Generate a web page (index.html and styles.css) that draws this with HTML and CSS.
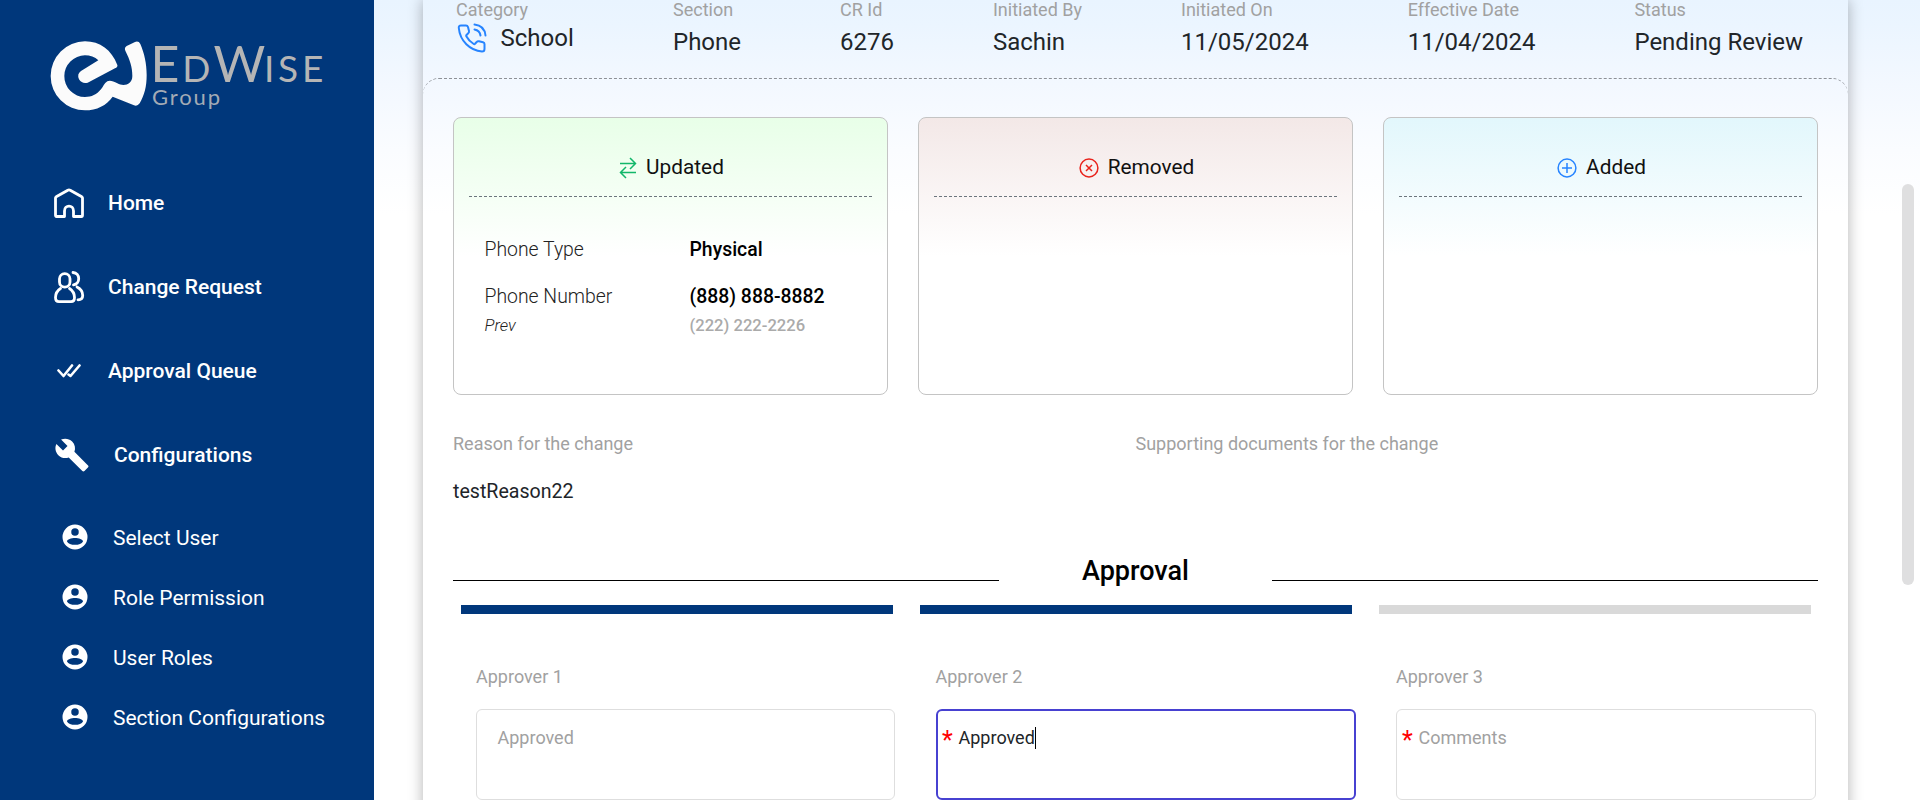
FILE: index.html
```html
<!DOCTYPE html>
<html lang="en">
<head>
<meta charset="utf-8">
<title>EdWise Group</title>
<link rel="stylesheet" href="styles.css">
</head>
<body>
<div class="app">
  <aside class="sidebar">
    <svg class="logo" viewBox="0 0 350 110" width="350" height="110" role="img" aria-label="EdWise Group">
      <path fill="#fbfbfb" transform="scale(.33333)" d="M262 135C245 90 210 64 165 64A104 104 0 0 0 62 168A103 103 0 0 0 165 271C200 271 230 256 248 230L312 256Q322 260 329 250C343 225 350 200 350 165C350 130 343 100 331 72Q326 62 315 66L290 78Q282 83 286 92C300 120 307 140 307 168C307 195 280 200 262 190C250 184 240 180 232 184C222 190 220 200 213 208C200 224 185 231 165 231A62 62 0 0 1 103 168A62 62 0 0 1 165 106C180 106 195 111 205 121L153 153Q140 162 147 178Q157 193 173 188L255 145Q264 141 262 135Z"/>
      <text class="logo-name" y="61.5"><tspan class="logo-cap" x="120.400">E</tspan><tspan x="152.300">D</tspan><tspan class="logo-cap" x="183.500">W</tspan><tspan x="234 248 272">ISE</tspan></text>
      <text class="logo-group" x="122" y="85" textLength="68" lengthAdjust="spacing">Group</text>
    </svg>
    <nav class="nav">
      <a class="nav-item"><span class="nav-icon"><svg width="30" height="30" viewBox="0 0 30 30" class="line"><path d="M10.500 28.500H2.500Q1.500 28.500 1.500 27V10Q1.500 9.300 2.200 8.800L13.800 2.200Q15 1.500 16.200 2.200L27.800 8.800Q28.500 9.300 28.500 10V27Q28.500 28.500 27.500 28.500H19.500V23C19.500 16.500 10.500 16.500 10.500 23Z"/></svg></span>Home</a>
      <a class="nav-item"><span class="nav-icon"><svg width="32" height="34" viewBox="-1 -1 32 34" class="line"><rect x="5.500" y="2.600" width="10.500" height="13.500" rx="5.200"/><path d="M6.500 17.500C3 19.800 1.500 22 1.500 26.500Q1.500 30.700 5 30.700H17Q20.500 30.700 20.500 26.500C20.500 22 19 19.800 15.500 17.500M19 1.500C26.500 2 26.500 13 19.500 13.800M23 16C27 18 28.700 20.500 28.700 24.500Q28.700 28.800 24 28.800"/></svg></span>Change Request</a>
      <a class="nav-item"><span class="nav-icon"><svg width="24" height="14" viewBox="0 0 24 14" class="line thin"><path d="M1.500 6.500L6.500 12L15 1.500M11.500 10.500L13.500 12L22.500 1.500"/></svg></span>Approval Queue</a>
      <a class="nav-item wide"><span class="nav-icon"><svg width="36" height="36" viewBox="0 0 24 24"><path d="M22.700 19l-9.100-9.100c.9-2.300.4-5-1.500-6.900-2-2-5-2.400-7.400-1.300L9 6 6 9 1.600 4.700C.4 7.100.9 10.100 2.900 12.100c1.900 1.900 4.600 2.400 6.900 1.500l9.100 9.100c.4.400 1 .400 1.400 0l2.300-2.300c.5-.4.5-1.100.1-1.400z"/></svg></span>Configurations</a>
    </nav>
    <nav class="subnav">
      <a class="sub-item"><svg width="30" height="30" viewBox="0 0 24 24"><path fill-rule="evenodd" d="M12 2a10 10 0 1 0 0 20a10 10 0 1 0 0-20zM12 5a3 3 0 1 1 0 6a3 3 0 1 1 0-6zM12 12.800C15 12.800 18.400 13.900 18.400 15.500C17.500 17.300 15 18.200 12 18.200C9 18.200 6.500 17.300 5.600 15.500C5.600 13.900 9 12.800 12 12.800z"/></svg>Select User</a>
      <a class="sub-item"><svg width="30" height="30" viewBox="0 0 24 24"><path fill-rule="evenodd" d="M12 2a10 10 0 1 0 0 20a10 10 0 1 0 0-20zM12 5a3 3 0 1 1 0 6a3 3 0 1 1 0-6zM12 12.800C15 12.800 18.400 13.900 18.400 15.500C17.500 17.300 15 18.200 12 18.200C9 18.200 6.500 17.300 5.600 15.500C5.600 13.900 9 12.800 12 12.800z"/></svg>Role Permission</a>
      <a class="sub-item"><svg width="30" height="30" viewBox="0 0 24 24"><path fill-rule="evenodd" d="M12 2a10 10 0 1 0 0 20a10 10 0 1 0 0-20zM12 5a3 3 0 1 1 0 6a3 3 0 1 1 0-6zM12 12.800C15 12.800 18.400 13.900 18.400 15.500C17.500 17.300 15 18.200 12 18.200C9 18.200 6.500 17.300 5.600 15.500C5.600 13.900 9 12.800 12 12.800z"/></svg>User Roles</a>
      <a class="sub-item"><svg width="30" height="30" viewBox="0 0 24 24"><path fill-rule="evenodd" d="M12 2a10 10 0 1 0 0 20a10 10 0 1 0 0-20zM12 5a3 3 0 1 1 0 6a3 3 0 1 1 0-6zM12 12.800C15 12.800 18.400 13.900 18.400 15.500C17.500 17.300 15 18.200 12 18.200C9 18.200 6.500 17.300 5.600 15.500C5.600 13.900 9 12.800 12 12.800z"/></svg>Section Configurations</a>
    </nav>
  </aside>

  <main class="main">
    <section class="card">
      <header class="summary">
        <div class="field"><span class="label">Category</span>
          <span class="value category"><svg width="30" height="30" viewBox="0 0 30 30"><path d="M4 2.500H9Q10.500 2.500 11 4L12 8Q12.300 9.500 11 10.500L9.500 12Q9 12.600 9.300 13.300Q12 18.300 16.700 21Q17.400 21.400 18 20.800L19.700 19Q20.500 18 22 18.300L26 19.300Q27.500 19.700 27.500 21V26Q27.500 28.500 25 28.500C13 27.500 3 18 1.800 5Q1.500 2.500 4 2.500ZM17.500 1.500Q27.500 2.500 28.500 12.500M17.500 6.500Q22.800 7.500 23.500 12.500"/></svg>School</span></div>
        <div class="field"><span class="label">Section</span><span class="value">Phone</span></div>
        <div class="field"><span class="label">CR Id</span><span class="value">6276</span></div>
        <div class="field"><span class="label">Initiated By</span><span class="value">Sachin</span></div>
        <div class="field"><span class="label">Initiated On</span><span class="value">11/05/2024</span></div>
        <div class="field"><span class="label">Effective Date</span><span class="value">11/04/2024</span></div>
        <div class="field"><span class="label">Status</span><span class="value">Pending Review</span></div>
      </header>

      <div class="content">
        <div class="changes">
          <article class="change updated">
            <h2 class="change-title"><svg width="18" height="22" viewBox="0 0 18 22" stroke="#12b76a"><path d="M1 6.500H16.500M11 1L16.500 6.500L11 12M17 15.500H1.500M7 10L1.500 15.500L7 21"/></svg>Updated</h2>
            <dl class="details">
              <dt>Phone Type</dt><dd>Physical</dd>
              <dt class="next">Phone Number</dt><dd class="next">(888) 888-8882</dd>
              <dt class="prev">Prev</dt><dd class="prev">(222) 222-2226</dd>
            </dl>
          </article>
          <article class="change removed">
            <h2 class="change-title"><svg width="20" height="20" viewBox="0 0 20 20" stroke="#e9231c"><circle cx="10" cy="10" r="8.900"/><path d="M7 7L13 13M13 7L7 13"/></svg>Removed</h2>
          </article>
          <article class="change added">
            <h2 class="change-title"><svg width="20" height="20" viewBox="0 0 20 20" stroke="#2684ff"><circle cx="10" cy="10" r="8.900"/><path d="M10 5V15M5 10H15"/></svg>Added</h2>
          </article>
        </div>

        <div class="notes">
          <div><h3 class="label">Reason for the change</h3><p class="reason">testReason22</p></div>
          <div><h3 class="label">Supporting documents for the change</h3></div>
        </div>

        <div class="divider"><span class="rule"></span><h2 class="divider-title">Approval</h2><span class="rule"></span></div>
        <div class="steps"><span class="step done"></span><span class="step done"></span><span class="step"></span></div>

        <div class="approvers">
          <div class="approver"><span class="label">Approver 1</span><div class="comment first">Approved</div></div>
          <div class="approver"><span class="label">Approver 2</span><div class="comment active"><b class="required">*</b><span class="typed">Approved</span></div></div>
          <div class="approver"><span class="label">Approver 3</span><div class="comment"><b class="required">*</b>Comments</div></div>
        </div>
      </div>
    </section>
    <div class="scrollbar"><span class="thumb"></span></div>
  </main>
</div>
</body>
</html>
```
FILE: styles.css
```css
* { box-sizing: border-box; margin: 0; padding: 0; }
body { height: 800px; overflow: hidden; font-family: Roboto, "Liberation Sans", sans-serif; color: #212529; background: #fff; }
svg { display: block; flex: none; }
.app { display: flex; height: 800px; overflow: hidden; }

/* Sidebar */
.sidebar { width: 374px; flex: none; background: #00377b; color: #fff; }
.logo { margin: 20px 0 0 30px; }
.logo-name { font: 400 37px Lato, sans-serif; fill: #b5b5b5; }
.logo-cap { font-size: 50px; }
.logo-group { font: 400 22px Lato, sans-serif; fill: #a3abb5; }
.nav { padding-top: 31px; }
.nav-item { display: flex; align-items: center; height: 84px; padding-left: 51px; font-size: 21px; font-weight: 500; }
.nav-icon { display: flex; justify-content: center; width: 36px; margin-right: 21px; }
.nav-item.wide { padding-left: 54px; }
.nav-item.wide .nav-icon { margin-right: 24px; }
.nav-item svg, .sub-item svg { fill: #fff; }
.nav-item .line { fill: none; stroke: #fff; stroke-width: 2.800; stroke-linecap: round; stroke-linejoin: round; }
.nav-item .thin { stroke-width: 2.600; }
.subnav { padding-top: 11px; }
.sub-item { display: flex; align-items: center; height: 60px; padding-left: 59.500px; gap: 23.500px; font-size: 21px; }
.sub-item svg { margin-top: -3px; }

/* Page */
.main { flex: 1; display: flex; justify-content: space-between; padding-left: 49px; background: linear-gradient(#e9f4ff 0, #ebf5ff 25px, #f3f8ff 85px, #fafcff 150px, #fff 215px); }
.card { width: 1425px; height: 860px; box-shadow: 0 0 14px rgba(0, 0, 0, .3); background: linear-gradient(#e9f4ff 0, #ebf5ff 25px, #f3f8ff 85px, #fafcff 150px, #fff 215px); }
.scrollbar { width: 18px; padding-top: 184px; }
.thumb { display: block; width: 12px; height: 401px; border-radius: 6px; background: #dfdfe0; }

.label { font-size: 18px; line-height: 22px; font-weight: 400; color: #a1a1a1; }
.summary { display: flex; justify-content: space-between; height: 78px; padding: 0 45px 0 33px; }
.field { display: flex; flex-direction: column; margin-top: -1px; }
.value { margin-top: 5px; font-size: 24px; line-height: 32px; }
.category { display: flex; align-items: center; gap: 13.500px; width: 118px; padding-left: 1px; margin-top: 1px; }
.category svg { fill: none; stroke: #2684ff; stroke-width: 2; stroke-linecap: round; stroke-linejoin: round; }

.content { padding: 38px 30px 0; border-top: 1px dashed #8d9197; border-radius: 16px 16px 0 0; }
.changes { display: grid; grid-template-columns: repeat(3, 1fr); gap: 30px; }
.change { height: 278px; padding: 0 15px; border: 1px solid #c4c4c4; border-radius: 8px; }
.updated { background: linear-gradient(#e8ffe8, #fff 50%); }
.removed { background: linear-gradient(#f3e8e7, #fff 50%); }
.added { background: linear-gradient(#e2f7fc, #fff 50%); }
.change-title { display: flex; justify-content: center; align-items: center; gap: 9px; height: 79px; padding: 19px 0 0 2px; border-bottom: 1px dashed #6c757d; font-size: 20.800px; font-weight: 400; color: #111; }
.change-title svg { fill: none; stroke-width: 1.500; margin-top: 2px; }
.details { display: grid; grid-template-columns: 205px 1fr; padding: 41px 0 0 15.500px; font-size: 19.400px; line-height: 24px; color: #000; }
.details dt { font-weight: 300; color: #222; }
.details dd { font-weight: 500; }
.details .next { margin-top: 23px; }
.details .prev { margin-top: 5px; font-size: 16.600px; }
.details dt.prev { font-style: italic; }
.details dd.prev { color: #aaa; }

.notes { display: grid; grid-template-columns: 1fr 1fr; height: 143px; padding-top: 38px; }
.reason { margin-top: 25px; font-size: 19.600px; line-height: 24px; }
.divider { display: flex; align-items: flex-end; height: 43px; }
.rule { width: 40%; height: 1px; background: #000; }
.divider-title { flex: 1; text-align: center; font-size: 27px; line-height: 32px; font-weight: 500; color: #000; margin-bottom: -6px; }
.steps { display: flex; gap: 27px; padding: 24px 0 0 8px; }
.step { width: 432px; height: 9px; background: #d9d9d9; }
.step.done { background: #00377b; }
.approvers { display: grid; grid-template-columns: 419px 420px 420px; gap: 40.500px; padding: 52px 0 0 23px; }
.approver { display: flex; flex-direction: column; gap: 21px; }
.comment { display: flex; height: 91px; padding: 17px 5px; border: 1px solid #dedede; border-radius: 6px; font-size: 18px; line-height: 22px; color: #a1a1a1; }
.comment.first { padding-left: 20.500px; }
.comment.active { padding: 16px 4.500px; border: 2px solid #4741d1; }
.required { width: 16.500px; font-size: 25px; line-height: 27px; font-weight: 400; color: #f00; }
.typed { height: 22px; border-right: 1px solid #000; color: #212529; }
```
